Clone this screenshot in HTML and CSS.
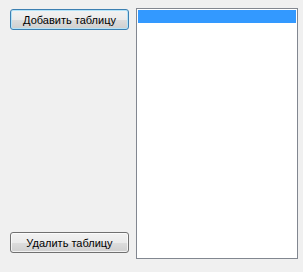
FILE: index.html
```html
<!DOCTYPE html>
<html lang="ru">
<head>
    <meta charset="UTF-8">
    <title>Таблицы</title>
    <link rel="stylesheet" href="styles.css">
</head>
<body>
    <div class="form">
        <div class="buttons">
            <button class="btn btn-focus">Добавить таблицу</button>
            <button class="btn">Удалить таблицу</button>
        </div>
        <div class="listbox">
            <div class="item selected"></div>
        </div>
    </div>
</body>
</html>
```

FILE: styles.css
```css
html, body {
    margin: 0;
    background: #f0f0f0;
}
body {
    font-family: "Liberation Sans", Arial, sans-serif;
    font-size: 11px;
}
.form {
    display: flex;
    padding: 8px 0 0 10px;
    height: 251px;
}
.buttons {
    width: 119px;
    display: flex;
    flex-direction: column;
    justify-content: space-between;
    padding: 1px 0 6px;
}
.btn {
    box-sizing: border-box;
    width: 119px;
    height: 21px;
    padding: 0;
    border: 1px solid #707070;
    border-radius: 3px;
    background: linear-gradient(#f2f2f2 0%, #ebebeb 50%, #dddddd 51%, #cfcfcf 100%);
    box-shadow: inset 0 0 0 1px rgba(255,255,255,0.7);
    font-family: "Liberation Sans", Arial, sans-serif;
    font-size: 11px;
    color: #000;
}
.btn-focus {
    border-color: #3c7fb1;
    box-shadow: inset 0 0 0 1px #b3e3f8;
}
.listbox {
    box-sizing: border-box;
    width: 162px;
    height: 251px;
    margin-left: 7px;
    border: 1px solid #828790;
    background: #fff;
    padding: 1px;
}
.item {
    height: 13px;
}
.selected {
    background: #3399ff;
}
```
